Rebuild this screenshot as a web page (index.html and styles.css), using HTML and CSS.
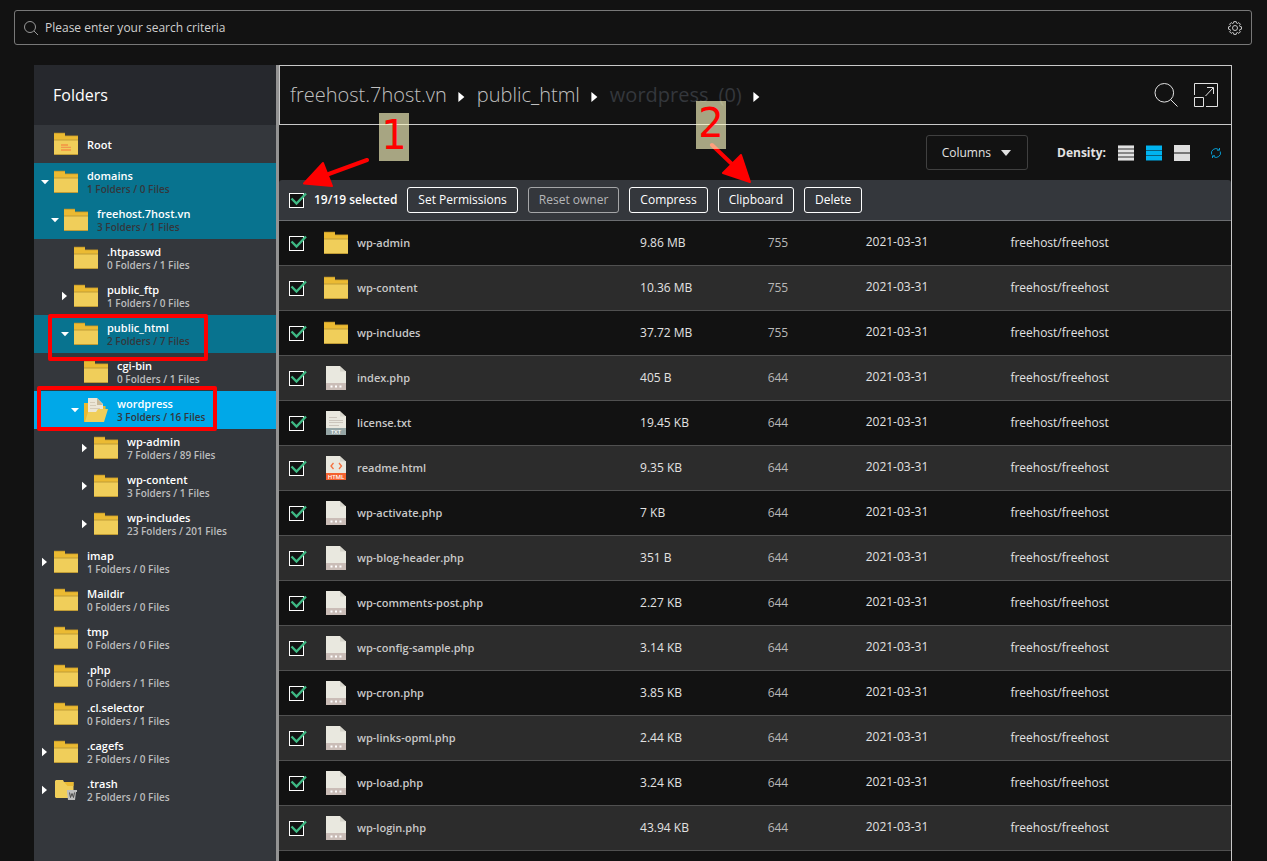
FILE: index.html
```html
<!DOCTYPE html>
<html lang="en">
<head>
<meta charset="utf-8">
<meta name="viewport" content="width=device-width, initial-scale=1">
<title>File Manager</title>
<link rel="stylesheet" href="styles.css">
</head>
<body>
<svg class="sprite" aria-hidden="true">
  <symbol id="folder" viewBox="0 0 24 24"><path fill="#ebba32" d="M0 1h11v3h13v5H0z"/><path fill="#f0ce5a" d="M0 8h24v15H0z"/><path fill="#c09c36" d="M0 7.500h24v1H0zM0 22h24v1H0z"/><path fill="#b98f28" d="M0 .7h11v.8H0zM11 3.500h13v.7H11z"/></symbol>
  <symbol id="folder-root" viewBox="0 0 24 24"><use href="#folder"/><path fill="#f3a048" d="M7 12h7v2H7zM7 17h10v2H7z"/><path fill="#ef8b4c" d="M7 14.800h10v1H7z"/></symbol>
  <symbol id="folder-open" viewBox="0 0 24 24"><path fill="#ebba32" d="M0 5h4v19H0zM18 8h3.500v8H18z"/><path fill="#ece6d6" d="M4 0h9l6 6v10H4z"/><path fill="#c9b896" d="M13 0l6 7h-6z"/><path stroke="#d5cbb8" d="M6 4.500h5M6 7.500h6M6 10.500h10"/><path fill="#f0ce5a" d="M4 14h8l2-3h10l-4 13H1z"/></symbol>
  <symbol id="folder-trash" viewBox="0 0 24 24"><path fill="#f0ce5a" d="M2 2h7l1 2h9.500v8H15l1 8H2l-1-1V3z"/><path fill="#ebba32" d="M10 4h9.500v4h-6z"/><path fill="#bdbdbd" d="M13 12h10v2h-1l-1 8h-7l-1-8z"/><path fill="none" stroke="#4a4a4a" d="M15.500 14.500l1 5 1.500-4 1.500 4 1-5"/></symbol>
  <symbol id="file" viewBox="0 0 24 24"><path fill="#e9e8df" d="M2 0h14v5h6v13H2z"/><path fill="#d6d4cb" d="M16 0l6 5.500h-6z"/><path fill="#cabdb7" d="M2 17h20v7H2z"/><path fill="#fff" d="M6.500 19.500h2v2h-2zM11 19.500h2v2h-2zM15.500 19.500h2v2h-2z"/></symbol>
  <symbol id="tick" viewBox="0 0 19 17"><path fill="none" stroke="#3fb984" stroke-width="2.400" d="M2.500 6.500L7.500 11.500 17 1.500"/></symbol>
  <symbol id="down" viewBox="0 0 10 10"><path fill="#fff" d="M1 3h8L5 7.200z"/></symbol>
  <symbol id="right" viewBox="0 0 10 10"><path fill="#fff" d="M2 .8L7 5 2 9.200z"/></symbol>
  <symbol id="lens" viewBox="0 0 24 24"><circle cx="10.300" cy="9.800" r="9.300" fill="none" stroke="currentColor"/><path stroke="currentColor" d="M16.500 16.500l7 7"/></symbol>
</svg>

<form class="search">
  <svg class="search-icon" viewBox="0 0 14 14"><circle cx="6" cy="6" r="5.500" fill="none" stroke="#999"/><path stroke="#999" d="M10 10l4 4"/></svg>
  <input class="search-input" type="text" aria-label="Search" placeholder="Please enter your search criteria">
  <button class="icon-button" type="button" aria-label="Search settings"><svg width="14" height="14" viewBox="0 0 14 14" fill="none" stroke="#c6c6c6"><path d="M5.800.600h2.400l.3 1.500 1 .4 1.300-.9 1.600 1.600-.9 1.300.4 1 1.600.3v2.400l-1.600.3-.4 1 .9 1.300-1.600 1.600-1.300-.9-1 .4-.3 1.500H5.800l-.3-1.500-1-.4-1.300.9-1.600-1.600.9-1.300-.4-1L.500 8.200V5.800l1.600-.3.4-1-.9-1.300 1.600-1.600 1.300.9 1-.4z"/><circle cx="7" cy="7" r="2.500"/></svg></button>
</form>

<div class="manager">
  <nav class="sidebar" aria-label="Folders">
    <h2 class="sidebar-title">Folders</h2>
    <ul class="tree">
      <li class="node level-0"><span class="caret"></span><svg class="icon"><use href="#folder-root"/></svg><a class="node-text" href="#"><b>Root</b></a></li>
      <li class="node level-0 node-path"><button class="caret" aria-label="Collapse domains"><svg><use href="#down"/></svg></button><svg class="icon"><use href="#folder"/></svg><a class="node-text" href="#"><b>domains</b><small>1 Folders / 0 Files</small></a></li>
      <li class="node level-1 node-path"><button class="caret" aria-label="Collapse freehost.7host.vn"><svg><use href="#down"/></svg></button><svg class="icon"><use href="#folder"/></svg><a class="node-text" href="#"><b>freehost.7host.vn</b><small>3 Folders / 1 Files</small></a></li>
      <li class="node level-2"><span class="caret"></span><svg class="icon"><use href="#folder"/></svg><a class="node-text" href="#"><b>.htpasswd</b><small>0 Folders / 1 Files</small></a></li>
      <li class="node level-2"><button class="caret" aria-label="Expand public_ftp"><svg><use href="#right"/></svg></button><svg class="icon"><use href="#folder"/></svg><a class="node-text" href="#"><b>public_ftp</b><small>1 Folders / 0 Files</small></a></li>
      <li class="node level-2 node-path"><button class="caret" aria-label="Collapse public_html"><svg><use href="#down"/></svg></button><svg class="icon"><use href="#folder"/></svg><a class="node-text" href="#"><b>public_html</b><small>2 Folders / 7 Files</small></a></li>
      <li class="node level-3"><span class="caret"></span><svg class="icon"><use href="#folder"/></svg><a class="node-text" href="#"><b>cgi-bin</b><small>0 Folders / 1 Files</small></a></li>
      <li class="node level-3 node-current"><button class="caret" aria-label="Collapse wordpress"><svg><use href="#down"/></svg></button><svg class="icon"><use href="#folder-open"/></svg><a class="node-text" href="#"><b>wordpress</b><small>3 Folders / 16 Files</small></a></li>
      <li class="node level-4"><button class="caret" aria-label="Expand wp-admin"><svg><use href="#right"/></svg></button><svg class="icon"><use href="#folder"/></svg><a class="node-text" href="#"><b>wp-admin</b><small>7 Folders / 89 Files</small></a></li>
      <li class="node level-4"><button class="caret" aria-label="Expand wp-content"><svg><use href="#right"/></svg></button><svg class="icon"><use href="#folder"/></svg><a class="node-text" href="#"><b>wp-content</b><small>3 Folders / 1 Files</small></a></li>
      <li class="node level-4"><button class="caret" aria-label="Expand wp-includes"><svg><use href="#right"/></svg></button><svg class="icon"><use href="#folder"/></svg><a class="node-text" href="#"><b>wp-includes</b><small>23 Folders / 201 Files</small></a></li>
      <li class="node level-0"><button class="caret" aria-label="Expand imap"><svg><use href="#right"/></svg></button><svg class="icon"><use href="#folder"/></svg><a class="node-text" href="#"><b>imap</b><small>1 Folders / 0 Files</small></a></li>
      <li class="node level-0"><span class="caret"></span><svg class="icon"><use href="#folder"/></svg><a class="node-text" href="#"><b>Maildir</b><small>0 Folders / 0 Files</small></a></li>
      <li class="node level-0"><span class="caret"></span><svg class="icon"><use href="#folder"/></svg><a class="node-text" href="#"><b>tmp</b><small>0 Folders / 0 Files</small></a></li>
      <li class="node level-0"><span class="caret"></span><svg class="icon"><use href="#folder"/></svg><a class="node-text" href="#"><b>.php</b><small>0 Folders / 1 Files</small></a></li>
      <li class="node level-0"><span class="caret"></span><svg class="icon"><use href="#folder"/></svg><a class="node-text" href="#"><b>.cl.selector</b><small>0 Folders / 1 Files</small></a></li>
      <li class="node level-0"><button class="caret" aria-label="Expand .cagefs"><svg><use href="#right"/></svg></button><svg class="icon"><use href="#folder"/></svg><a class="node-text" href="#"><b>.cagefs</b><small>2 Folders / 0 Files</small></a></li>
      <li class="node level-0"><button class="caret" aria-label="Expand .trash"><svg><use href="#right"/></svg></button><svg class="icon"><use href="#folder-trash"/></svg><a class="node-text" href="#"><b>.trash</b><small>2 Folders / 0 Files</small></a></li>
    </ul>
  </nav>

  <main class="content">
    <header class="path-bar">
      <a class="crumb" href="#">freehost.7host.vn</a><svg class="crumb-arrow"><use href="#right"/></svg>
      <a class="crumb" href="#">public_html</a><svg class="crumb-arrow"><use href="#right"/></svg>
      <span class="crumb crumb-current"><span>wordpress</span><span>(0)</span></span><svg class="crumb-arrow"><use href="#right"/></svg>
      <div class="path-actions">
        <button class="icon-button" aria-label="Find"><svg width="24" height="24"><use href="#lens"/></svg></button>
        <button class="icon-button" aria-label="Full screen"><svg width="24" height="24" viewBox="0 0 24 24" fill="none" stroke="#e2e2e2"><path d="M.5 12V.500h23v23H12"/><path d="M.5 14.500h9v9h-9zM11.500 13L19 5M13 4.500h6.500V11"/></svg></button>
      </div>
    </header>

    <div class="toolbar">
      <button class="columns-button">Columns <svg width="12" height="8" viewBox="0 0 12 8"><path fill="#e2e2e2" d="M1 1h10L6 7z"/></svg></button>
      <span class="density-label">Density:</span>
      <div class="density">
        <button class="icon-button" aria-label="Compact"><svg width="16" height="16"><path fill="#888" d="M0 0h16v16H0z"/><path fill="#e2e2e2" d="M0 1h16v2H0zM0 5h16v2H0zM0 9h16v2H0zM0 13h16v2H0z"/></svg></button>
        <button class="icon-button" aria-label="Normal"><svg width="16" height="16"><path fill="#08607f" d="M0 0h16v16H0z"/><path fill="#00b4f0" d="M0 1h16v4H0zM0 6h16v4H0zM0 11h16v4H0z"/></svg></button>
        <button class="icon-button" aria-label="Spacious"><svg width="16" height="16"><path fill="#777" d="M0 0h16v16H0z"/><path fill="#dedede" d="M0 0h16v7H0zM0 9h16v7H0z"/></svg></button>
      </div>
      <button class="icon-button refresh" aria-label="Refresh"><svg width="10" height="10" viewBox="0 0 10 10" fill="none" stroke="#079cd0"><path d="M.7 6.500A4.400 4.400 0 0 1 7.500 1.500M9.300 3.500A4.400 4.400 0 0 1 2.500 8.500"/><path d="M6 2.200h2.500V0M4 7.800H1.500V10"/></svg></button>
    </div>

    <div class="selection-bar">
      <label class="check"><input type="checkbox" checked aria-label="Select all"><svg><use href="#tick"/></svg></label>
      <b class="selection-count">19/19 selected</b>
      <button class="action">Set Permissions</button>
      <button class="action" disabled>Reset owner</button>
      <button class="action">Compress</button>
      <button class="action">Clipboard</button>
      <button class="action">Delete</button>
    </div>

    <table class="files">
      <colgroup><col class="col-check"><col class="col-name"><col class="col-size"><col class="col-mode"><col class="col-date"><col></colgroup>
      <tbody>
        <tr><td><label class="check"><input type="checkbox" checked aria-label="Select wp-admin"><svg><use href="#tick"/></svg></label></td><td><a class="file-name" href="#"><svg class="icon"><use href="#folder"/></svg>wp-admin</a></td><td>9.86 MB</td><td class="mode">755</td><td class="date">2021-03-31</td><td>freehost/freehost</td></tr>
        <tr><td><label class="check"><input type="checkbox" checked aria-label="Select wp-content"><svg><use href="#tick"/></svg></label></td><td><a class="file-name" href="#"><svg class="icon"><use href="#folder"/></svg>wp-content</a></td><td>10.36 MB</td><td class="mode">755</td><td class="date">2021-03-31</td><td>freehost/freehost</td></tr>
        <tr><td><label class="check"><input type="checkbox" checked aria-label="Select wp-includes"><svg><use href="#tick"/></svg></label></td><td><a class="file-name" href="#"><svg class="icon"><use href="#folder"/></svg>wp-includes</a></td><td>37.72 MB</td><td class="mode">755</td><td class="date">2021-03-31</td><td>freehost/freehost</td></tr>
        <tr><td><label class="check"><input type="checkbox" checked aria-label="Select index.php"><svg><use href="#tick"/></svg></label></td><td><a class="file-name" href="#"><svg class="icon"><use href="#file"/></svg>index.php</a></td><td>405 B</td><td class="mode">644</td><td class="date">2021-03-31</td><td>freehost/freehost</td></tr>
        <tr><td><label class="check"><input type="checkbox" checked aria-label="Select license.txt"><svg><use href="#tick"/></svg></label></td><td><a class="file-name" href="#"><svg class="icon" viewBox="0 0 24 24"><path fill="#e9e8df" d="M2 0h14v5h6v13H2z"/><path fill="#d6d4cb" d="M16 0l6 5.500h-6z"/><path stroke="#cbc5bc" d="M5 6.500h8M5 9.500h14M5 11.500h14M5 14.500h10"/><path fill="#95a5a5" d="M2 17h20v7H2z"/><text class="ext" x="12" y="23" text-anchor="middle">TXT</text></svg>license.txt</a></td><td>19.45 KB</td><td class="mode">644</td><td class="date">2021-03-31</td><td>freehost/freehost</td></tr>
        <tr><td><label class="check"><input type="checkbox" checked aria-label="Select readme.html"><svg><use href="#tick"/></svg></label></td><td><a class="file-name" href="#"><svg class="icon" viewBox="0 0 24 24"><path fill="#e9e8df" d="M2 0h14v5h6v13H2z"/><path fill="#d6d4cb" d="M16 0l6 5.500h-6z"/><path fill="none" stroke="#f4713f" stroke-width="1.300" d="M9.500 7L7 10l2.500 3M15 7l2.500 3-2.500 3"/><path fill="#f4622f" d="M2 17h20v7H2z"/><text class="ext" x="12" y="23" text-anchor="middle">HTML</text></svg>readme.html</a></td><td>9.35 KB</td><td class="mode">644</td><td class="date">2021-03-31</td><td>freehost/freehost</td></tr>
        <tr><td><label class="check"><input type="checkbox" checked aria-label="Select wp-activate.php"><svg><use href="#tick"/></svg></label></td><td><a class="file-name" href="#"><svg class="icon"><use href="#file"/></svg>wp-activate.php</a></td><td>7 KB</td><td class="mode">644</td><td class="date">2021-03-31</td><td>freehost/freehost</td></tr>
        <tr><td><label class="check"><input type="checkbox" checked aria-label="Select wp-blog-header.php"><svg><use href="#tick"/></svg></label></td><td><a class="file-name" href="#"><svg class="icon"><use href="#file"/></svg>wp-blog-header.php</a></td><td>351 B</td><td class="mode">644</td><td class="date">2021-03-31</td><td>freehost/freehost</td></tr>
        <tr><td><label class="check"><input type="checkbox" checked aria-label="Select wp-comments-post.php"><svg><use href="#tick"/></svg></label></td><td><a class="file-name" href="#"><svg class="icon"><use href="#file"/></svg>wp-comments-post.php</a></td><td>2.27 KB</td><td class="mode">644</td><td class="date">2021-03-31</td><td>freehost/freehost</td></tr>
        <tr><td><label class="check"><input type="checkbox" checked aria-label="Select wp-config-sample.php"><svg><use href="#tick"/></svg></label></td><td><a class="file-name" href="#"><svg class="icon"><use href="#file"/></svg>wp-config-sample.php</a></td><td>3.14 KB</td><td class="mode">644</td><td class="date">2021-03-31</td><td>freehost/freehost</td></tr>
        <tr><td><label class="check"><input type="checkbox" checked aria-label="Select wp-cron.php"><svg><use href="#tick"/></svg></label></td><td><a class="file-name" href="#"><svg class="icon"><use href="#file"/></svg>wp-cron.php</a></td><td>3.85 KB</td><td class="mode">644</td><td class="date">2021-03-31</td><td>freehost/freehost</td></tr>
        <tr><td><label class="check"><input type="checkbox" checked aria-label="Select wp-links-opml.php"><svg><use href="#tick"/></svg></label></td><td><a class="file-name" href="#"><svg class="icon"><use href="#file"/></svg>wp-links-opml.php</a></td><td>2.44 KB</td><td class="mode">644</td><td class="date">2021-03-31</td><td>freehost/freehost</td></tr>
        <tr><td><label class="check"><input type="checkbox" checked aria-label="Select wp-load.php"><svg><use href="#tick"/></svg></label></td><td><a class="file-name" href="#"><svg class="icon"><use href="#file"/></svg>wp-load.php</a></td><td>3.24 KB</td><td class="mode">644</td><td class="date">2021-03-31</td><td>freehost/freehost</td></tr>
        <tr><td><label class="check"><input type="checkbox" checked aria-label="Select wp-login.php"><svg><use href="#tick"/></svg></label></td><td><a class="file-name" href="#"><svg class="icon"><use href="#file"/></svg>wp-login.php</a></td><td>43.94 KB</td><td class="mode">644</td><td class="date">2021-03-31</td><td>freehost/freehost</td></tr>
      </tbody>
    </table>
  </main>
</div>

<svg class="notes" width="760" height="440" viewBox="0 0 760 440">
  <g fill="none" stroke="#f00" stroke-width="4" stroke-linejoin="round" stroke-linecap="round">
    <path d="M50 316h156v43H50zM39 388h176v41H39z"/>
    <path d="M367 160L326 175M712 145L734 166"/>
  </g>
  <g fill="#f00" stroke="#f00" stroke-width="2" stroke-linejoin="round">
    <path d="M304 183.500L323 163 332 186zM750 182L741 155 723 173z"/>
  </g>
  <path fill="#fffcc4" fill-opacity=".63" d="M379 113h30v48h-30zM696 101h30v48h-30z"/>
  <g class="note-number"><text x="394" y="149" text-anchor="middle">1</text><text x="711" y="137" text-anchor="middle">2</text></g>
</svg>
</body>
</html>
```
FILE: styles.css
```css
* { box-sizing: border-box; }

body {
  margin: 0;
  min-height: 100vh;
  display: flex;
  flex-direction: column;
  position: relative;
  background: #121212;
  color: #e2e2e2;
  font: 12px/16px "Open Sans", "Noto Sans", sans-serif;
}

.sprite { position: absolute; width: 0; height: 0; }
.ext { font: 600 6px "Open Sans", sans-serif; fill: #fff; }
a { color: inherit; text-decoration: none; }
button, input { font: inherit; color: inherit; }
svg { display: block; flex: none; }

.icon-button { display: flex; padding: 0; border: 0; background: none; }
.icon { width: 24px; height: 24px; }

.search {
  display: flex;
  align-items: center;
  gap: 7px;
  height: 35px;
  margin: 10px 15px 20px 14px;
  padding: 0 9px;
  border: 1px solid #787878;
  border-radius: 3px;
}
.search-icon { width: 14px; height: 14px; }
.search-input { flex: 1; padding: 0; border: 0; outline: 0; background: none; }
.search-input::placeholder { color: #d0d0d0; opacity: 1; }

.manager { flex: 1; display: flex; margin: 0 35px 0 34px; }

.sidebar { flex: none; width: 245px; border-right: 3px solid #939393; background: #34373c; }
.sidebar-title {
  margin: 0;
  padding: 0 19px;
  background: #26282d;
  color: #fff;
  font-size: 16px;
  font-weight: 400;
  line-height: 60px;
}

.tree { margin: 0; padding: 0; list-style: none; }
.node { display: flex; align-items: center; height: 38px; color: #fff; }
.node-path { background: #08738f; }
.node-current { background: #00a8e8; }
.level-0 { padding-left: 6px; }
.level-1 { padding-left: 16px; }
.level-2 { padding-left: 26px; }
.level-3 { padding-left: 36px; }
.level-4 { padding-left: 46px; }
.caret { width: 10px; height: 10px; margin-right: 4px; padding: 0; border: 0; background: none; }
.caret svg { width: 10px; height: 10px; }
.node-text { display: flex; flex-direction: column; margin-left: 9px; }
.node b { font-size: 11px; font-weight: 600; line-height: 15px; }
.node small { font-size: 10px; font-weight: 600; line-height: 13px; color: #bcbdbe; }
.node-path small, .node-current small { color: #34373c; }

.content { flex: 1; min-width: 0; border-right: 1px solid #c8c8c8; }

.path-bar {
  display: flex;
  align-items: center;
  height: 60px;
  padding: 0 13px 0 10px;
  border: solid #c8c8c8;
  border-width: 1px 0 1px 1px;
  font-size: 20px;
  font-weight: 300;
  line-height: 28px;
}
.crumb { color: #c0c0c0; }
.crumb-current { display: flex; gap: 10px; color: #34373c; font-weight: 400; }
.crumb-arrow { width: 12px; height: 12px; margin: 4px 9px 0; }
.path-actions { display: flex; gap: 16px; margin-left: auto; }

.toolbar { display: flex; align-items: center; justify-content: flex-end; height: 55px; padding-right: 10px; }
.columns-button {
  display: flex;
  align-items: center;
  gap: 9px;
  height: 35px;
  padding: 0 15px;
  border: 1px solid #404040;
  border-radius: 3px;
  background: none;
}
.density-label { margin: 0 12px 0 29px; font-weight: 700; }
.density { display: flex; gap: 12px; }
.refresh { margin-left: 21px; }

.selection-bar {
  display: flex;
  align-items: center;
  gap: 10px;
  height: 41px;
  padding-left: 10px;
  border-bottom: 1px solid #6c6e71;
  border-radius: 3px 3px 0 0;
  background: #34373c;
}
.selection-count { color: #fff; font-weight: 600; }
.action {
  height: 26px;
  padding: 0 10px;
  border: 1px solid #fff;
  border-radius: 3px;
  background: none;
  color: #fff;
}
.action:disabled { border-color: #a5a6a8; color: #b5b6b8; }

.check { display: block; position: relative; width: 15px; height: 15px; }
.check input {
  display: block;
  width: 15px;
  height: 15px;
  margin: 0;
  appearance: none;
  border: 1px solid #fff;
  background: #121212;
}
.check svg { position: absolute; left: 0; top: -1px; width: 19px; height: 17px; pointer-events: none; }

.files { width: 100%; border-spacing: 0; table-layout: fixed; }
.files tr:nth-child(even) { background: #2c2c2c; }
.files td { height: 45px; padding: 0; border-bottom: 1px solid #505050; }
.files td:first-child { padding-left: 10px; }
.files .mode { color: #b8b8b8; }
.files .date { padding-bottom: 2px; }
.col-check { width: 45px; }
.col-name { width: 33.2%; }
.col-size { width: 13.4%; }
.col-mode { width: 10.3%; }
.col-date { width: 15.2%; }
.file-name { display: flex; align-items: center; gap: 9px; color: #c8c8c8; font-size: 11px; font-weight: 600; }

.notes { position: absolute; left: 0; top: 0; pointer-events: none; }
.note-number { font: 40px "DejaVu Sans", sans-serif; fill: #f00; }
```
